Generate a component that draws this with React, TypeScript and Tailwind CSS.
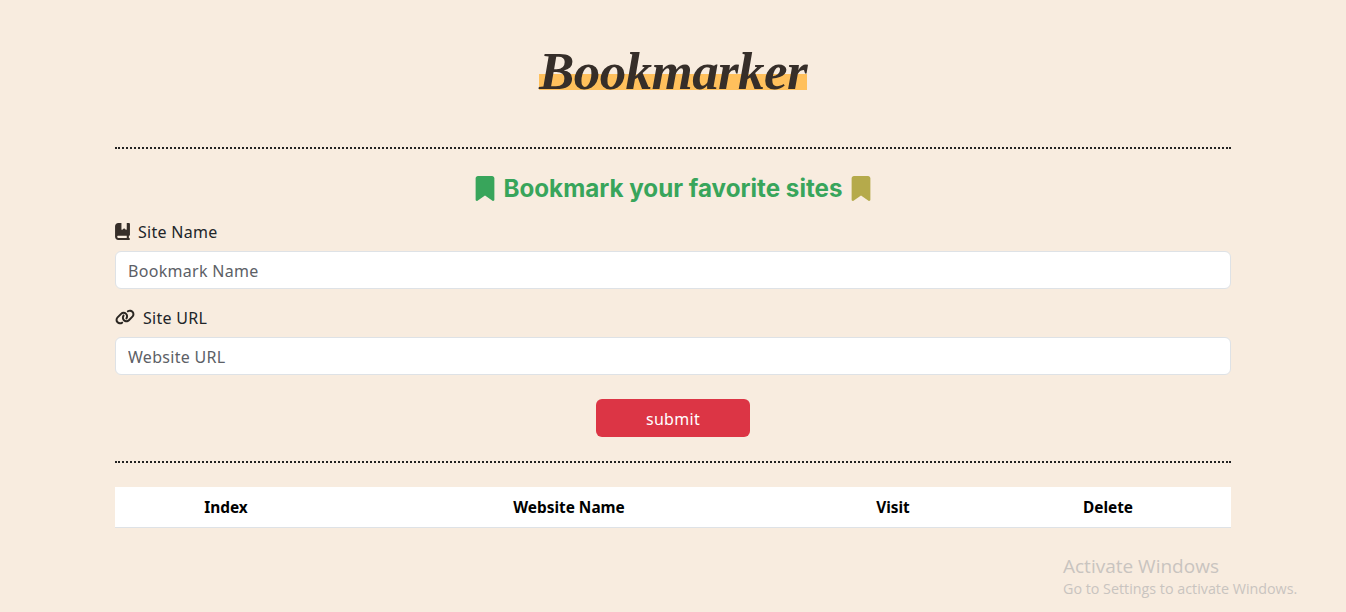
import { FaBookBookmark, FaBookmark, FaLink } from "react-icons/fa6";

const body = "font-['Noto_Sans',sans-serif]";

function Field({ icon, label, placeholder }: { icon: React.ReactNode; label: string; placeholder: string }) {
  return (
    <div>
      <label className="flex h-6 items-center gap-2 text-[16px] leading-6 tracking-[0.3px] text-[#212529]">
        {icon}
        <span className="pt-[1px]">{label}</span>
      </label>
      <input
        readOnly
        placeholder={placeholder}
        className="mt-2 block h-[38px] w-full rounded-md border border-[#dee2e6] bg-white px-3 pt-[1px] text-[16px] tracking-[0.3px] text-[#212529] placeholder:text-[#5c6066]"
      />
    </div>
  );
}

export default function App() {
  return (
    <div className={`relative h-[612px] overflow-hidden bg-[#f8ecdf] ${body}`}>
      <div className="mx-auto w-[1116px]">
        <header className="flex h-[147px] justify-center pt-[41px]">
          <h1 className="relative h-[60px] w-[268px] text-center">
            <span className="absolute bottom-[11px] left-0 h-[16px] w-full bg-[#ffc05c]" />
            <span className="relative font-['Liberation_Serif',serif] text-[53px] font-bold italic leading-[60px] tracking-[-0.6px] text-[#362e29]">
              Bookmarker
            </span>
          </h1>
        </header>
        <hr className="border-0 border-t-2 border-dotted border-[#222]" />
        <h2 className="mt-[23px] flex h-[32px] items-center justify-center gap-2 font-['Inter',sans-serif] text-[24.2px] font-bold text-[#38a55b]">
          <FaBookmark className="h-[25px] w-[20px]" />
          <span className="pt-[2px]">Bookmark your favorite sites</span>
          <FaBookmark className="h-[25px] w-[20px] text-[#b5aa4b]" />
        </h2>
        <div className="mt-[15px] flex flex-col gap-[16px]">
          <Field icon={<FaBookBookmark className="h-[17px] w-[15px] text-[#362e29]" />} label="Site Name" placeholder="Bookmark Name" />
          <Field icon={<FaLink className="h-[16px] w-[20px] text-[#2a2622]" />} label="Site URL" placeholder="Website URL" />
        </div>
        <div className="mt-[24px] flex justify-center">
          <button className="h-[38px] w-[154px] rounded-md bg-[#dc3545] pt-[1px] text-[16px] tracking-[0.3px] text-white">submit</button>
        </div>
        <hr className="mt-[24px] border-0 border-t-2 border-dotted border-[#222]" />
        <div className="mt-[24px] grid h-[41px] grid-cols-[222px_464px_184px_246px] items-center border-b border-[#dee2e6] bg-white pt-[2px] text-center text-[15.4px] font-bold text-black">
          <div>Index</div>
          <div>Website Name</div>
          <div>Visit</div>
          <div>Delete</div>
        </div>
      </div>
      <div className="absolute left-[1063px] top-[554px] font-['Open_Sans',sans-serif] text-[#c9c4bf]">
        <div className="text-[19px] leading-[24px]">Activate Windows</div>
        <div className="text-[14.3px] leading-[22px]">Go to Settings to activate Windows.</div>
      </div>
    </div>
  );
}
